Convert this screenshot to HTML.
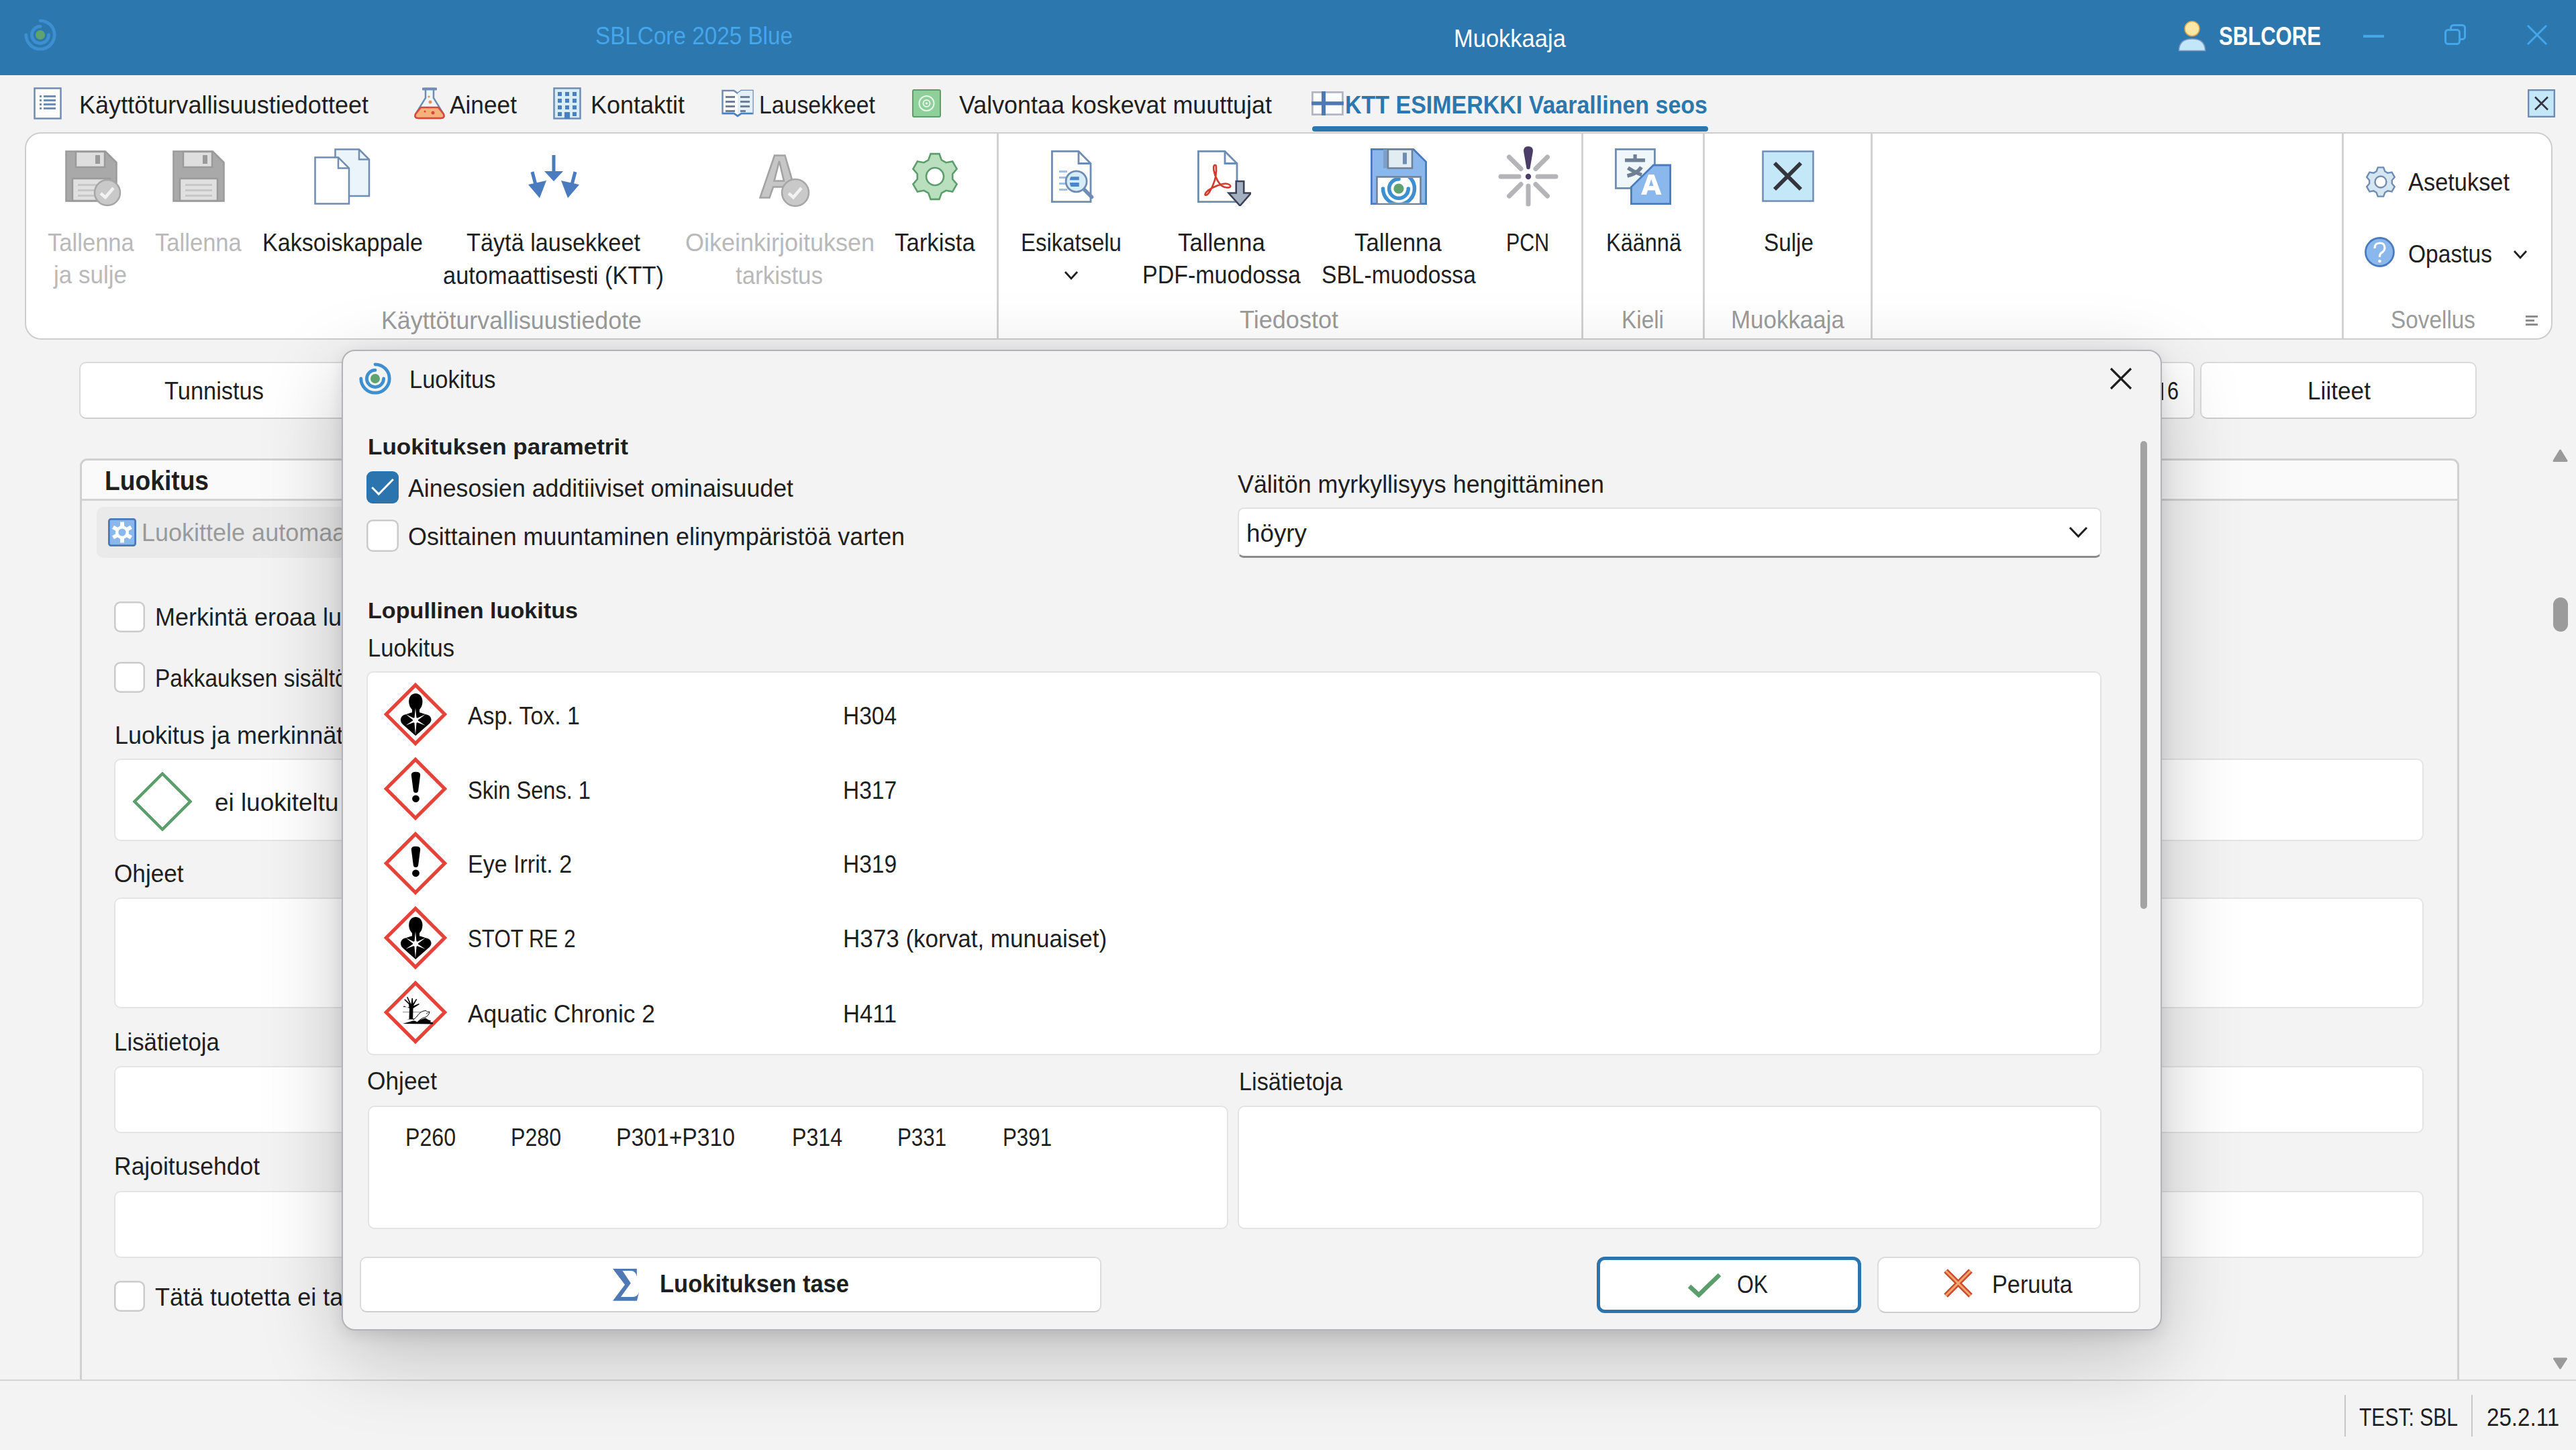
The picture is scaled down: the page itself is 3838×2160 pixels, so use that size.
<!DOCTYPE html>
<html><head><meta charset="utf-8"><title>Luokitus</title>
<style>
html,body{margin:0;padding:0;}
body{width:3838px;height:2160px;overflow:hidden;position:relative;background:#f3f3f3;font-family:"Liberation Sans",sans-serif;}
.a{position:absolute;display:block;}
.t{position:absolute;white-space:nowrap;transform-origin:0 0;}
</style></head><body>
<div class="a" style="left:0px;top:0px;width:3838px;height:112px;background:#2c77ad"></div>
<svg class="a" style="left:32px;top:24px;" width="56" height="56" viewBox="0 0 56 56"><path d="M28,6.800000000000001 A21.2,21.2 0 1 1 6.800000000000001,28" fill="none" stroke="#3d8fd0" stroke-width="4.8" stroke-linecap="round"/><path d="M28,15.4 A12.6,12.6 0 1 0 40.6,28" fill="none" stroke="#3d8fd0" stroke-width="4.8" stroke-linecap="round"/><circle cx="28" cy="28" r="7" fill="#5fa36f"/></svg>
<div class="t" style="left:887.0px;top:36.4px;font-size:36px;line-height:36px;color:#46a6ea;transform:scaleX(0.9238);">SBLCore 2025 Blue</div>
<div class="t" style="left:2166.0px;top:40.4px;font-size:36px;line-height:36px;color:#ffffff;transform:scaleX(0.9584);">Muokkaaja</div>
<svg class="a" style="left:3245px;top:30px;" width="42" height="47" viewBox="0 0 42 47"><circle cx="21" cy="12.8" r="11" fill="#fde7a6" stroke="#d6a24c" stroke-width="1.6"/><path d="M1.5,45.5 C1.5,33 9,28 21,28 C33,28 40.5,33 40.5,45.5 Z" fill="#c3e6f8" stroke="#7f9cc0" stroke-width="1.6"/></svg>
<div class="t" style="left:3306.0px;top:34.7px;font-size:38px;line-height:38px;color:#ffffff;font-weight:bold;transform:scaleX(0.8180);">SBLCORE</div>
<div class="a" style="left:3521px;top:52px;width:31px;height:4px;background:#46a6ea"></div>
<svg class="a" style="left:3642px;top:36px;" width="32" height="32" viewBox="0 0 32 32"><rect x="9.5" y="1.5" width="21" height="21" rx="4" fill="none" stroke="#46a6ea" stroke-width="3"/><rect x="1.5" y="8.5" width="21" height="21" rx="4" fill="#2c77ad" stroke="#46a6ea" stroke-width="3"/></svg>
<svg class="a" style="left:3764px;top:36px;" width="32" height="32" viewBox="0 0 32 32"><path d="M2,2 L30,30 M30,2 L2,30" stroke="#46a6ea" stroke-width="3" fill="none"/></svg>
<svg class="a" style="left:50px;top:130px;" width="42" height="48" viewBox="0 0 42 48"><rect x="1.5" y="1.5" width="39" height="45" fill="#fff" stroke="#6f8db3" stroke-width="2.5"/><rect x="9" y="12" width="3" height="3" fill="#6f8db3"/><rect x="15" y="12" width="18" height="3" fill="#6f8db3"/><rect x="9" y="18" width="3" height="3" fill="#6f8db3"/><rect x="15" y="18" width="18" height="3" fill="#6f8db3"/><rect x="9" y="24" width="3" height="3" fill="#6f8db3"/><rect x="15" y="24" width="18" height="3" fill="#6f8db3"/><rect x="9" y="30" width="3" height="3" fill="#6f8db3"/><rect x="15" y="30" width="18" height="3" fill="#6f8db3"/></svg>
<svg class="a" style="left:616px;top:130px;" width="48" height="48" viewBox="0 0 48 48"><path d="M16,2 h16 M18,2 v14 L3,40 Q1,46 7,46 h34 Q47,46 45,40 L30,16 v-14" fill="#eef5fb" stroke="#6f8db3" stroke-width="2.5"/><path d="M11,30 h26 l8,10 Q47,46 41,46 h-34 Q1,46 3,40 Z" fill="#f5b27a" stroke="#d7473a" stroke-width="2.5"/><circle cx="23" cy="14" r="1.6" fill="#e8925a"/><circle cx="25" cy="22" r="2.5" fill="#e8925a"/><circle cx="29" cy="38" r="2.5" fill="#d7473a"/><circle cx="17" cy="36" r="1.5" fill="#d7473a"/><rect x="13" y="0.5" width="22" height="4" rx="1" fill="#6f8db3"/></svg>
<svg class="a" style="left:824px;top:130px;" width="42" height="48" viewBox="0 0 42 48"><rect x="1.5" y="1.5" width="39" height="45" fill="#d7eefa" stroke="#6f8db3" stroke-width="2.5"/><rect x="7" y="7" width="6" height="6" fill="#4a7fc0"/><rect x="18" y="7" width="6" height="6" fill="#4a7fc0"/><rect x="29" y="7" width="6" height="6" fill="#4a7fc0"/><rect x="7" y="17" width="6" height="6" fill="#4a7fc0"/><rect x="18" y="17" width="6" height="6" fill="#4a7fc0"/><rect x="29" y="17" width="6" height="6" fill="#4a7fc0"/><rect x="7" y="27" width="6" height="6" fill="#4a7fc0"/><rect x="18" y="27" width="6" height="6" fill="#4a7fc0"/><rect x="29" y="27" width="6" height="6" fill="#4a7fc0"/><rect x="7" y="37" width="6" height="6" fill="#4a7fc0"/><rect x="29" y="37" width="6" height="6" fill="#4a7fc0"/><rect x="17" y="37" width="8" height="10" fill="#4a7fc0"/></svg>
<svg class="a" style="left:1075px;top:133px;" width="48" height="42" viewBox="0 0 48 42"><path d="M1.5,2 h17 l5.5,4 l5.5,-4 h17 v34 h-17 l-5.5,3.5 l-5.5,-3.5 h-17 Z" fill="#fff" stroke="#6f8db3" stroke-width="2.5"/><path d="M24,6 v30 h22.5 v-34 h-17 z" fill="#e3f0f7"/><rect x="6" y="10" width="14" height="3" fill="#6f7f95"/><rect x="28" y="10" width="14" height="3" fill="#6f7f95"/><rect x="6" y="17" width="14" height="3" fill="#6f7f95"/><rect x="28" y="17" width="14" height="3" fill="#6f7f95"/><rect x="6" y="24" width="14" height="3" fill="#6f7f95"/><rect x="28" y="24" width="14" height="3" fill="#6f7f95"/><rect x="6" y="31" width="14" height="3" fill="#6f7f95"/><rect x="28" y="31" width="8" height="3" fill="#6f7f95"/><path d="M1.5,36 h17 l5.5,4 l5.5,-4 h17" fill="none" stroke="#4a7fc0" stroke-width="2.5"/></svg>
<svg class="a" style="left:1359px;top:133px;" width="43" height="42" viewBox="0 0 43 42"><rect x="1" y="1" width="41" height="40" rx="2" fill="#8fcf9a" stroke="#5c9e6b" stroke-width="2"/><circle cx="21.5" cy="21" r="11" fill="none" stroke="#e7f5ea" stroke-width="2"/><circle cx="21.5" cy="21" r="5" fill="none" stroke="#e7f5ea" stroke-width="2"/><circle cx="21.5" cy="21" r="1.8" fill="#e7f5ea"/></svg>
<svg class="a" style="left:1954px;top:136px;" width="48" height="36" viewBox="0 0 48 36"><rect x="1.4" y="1.4" width="45" height="33.2" fill="#fafcfd" stroke="#b2b6c0" stroke-width="2.8"/><rect x="15" y="0" width="6" height="36" fill="#4f79b3"/><rect x="0" y="15.2" width="48" height="5.5" fill="#4f79b3"/></svg>
<svg class="a" style="left:3766px;top:133px;" width="41" height="42" viewBox="0 0 41 42"><rect x="1.2" y="1.2" width="38.6" height="39.6" fill="#c5e8f8" stroke="#6f8db3" stroke-width="2.4"/><path d="M11,11.5 L30,30.5 M30,11.5 L11,30.5" stroke="#34343f" stroke-width="2.6"/></svg>
<div class="t" style="left:118.0px;top:139.4px;font-size:36px;line-height:36px;color:#1f1f1f;transform:scaleX(1.0019);">Käyttöturvallisuustiedotteet</div>
<div class="t" style="left:670.0px;top:139.4px;font-size:36px;line-height:36px;color:#1f1f1f;transform:scaleX(0.9798);">Aineet</div>
<div class="t" style="left:880.0px;top:139.4px;font-size:36px;line-height:36px;color:#1f1f1f;">Kontaktit</div>
<div class="t" style="left:1131.0px;top:139.4px;font-size:36px;line-height:36px;color:#1f1f1f;transform:scaleX(0.9395);">Lausekkeet</div>
<div class="t" style="left:1429.0px;top:139.4px;font-size:36px;line-height:36px;color:#1f1f1f;transform:scaleX(0.9965);">Valvontaa koskevat muuttujat</div>
<div class="t" style="left:2004.0px;top:139.4px;font-size:36px;line-height:36px;color:#2c77ad;font-weight:bold;transform:scaleX(0.9437);">KTT ESIMERKKI Vaarallinen seos</div>
<div class="a" style="left:1955px;top:188px;width:590px;height:8px;background:#2c77ad;border-radius:4px"></div>
<div class="a" style="left:37px;top:197px;width:3766px;height:309px;background:#fff;border:2px solid #cdcdcd;border-radius:24px;box-sizing:border-box"></div>
<div class="a" style="left:1485px;top:198px;width:3px;height:307px;background:#d2d2d2"></div>
<div class="a" style="left:2356px;top:198px;width:3px;height:307px;background:#d2d2d2"></div>
<div class="a" style="left:2537px;top:198px;width:3px;height:307px;background:#d2d2d2"></div>
<div class="a" style="left:2787px;top:198px;width:3px;height:307px;background:#d2d2d2"></div>
<div class="a" style="left:3489px;top:198px;width:3px;height:307px;background:#d2d2d2"></div>
<svg class="a" style="left:97px;top:224px;" width="78" height="77" viewBox="0 0 78 77"><path d="M1.5,1.5 H60 L76.5,18 V75.5 H1.5 Z" fill="#a9a9a9" stroke="#9a9a9a" stroke-width="2.5"/><rect x="16" y="2" width="43" height="23" fill="#dedede" stroke="#9a9a9a" stroke-width="2.5"/><rect x="45" y="7" width="7" height="13" fill="#9a9a9a"/><rect x="11" y="42" width="56" height="33" fill="#e0e0e0" stroke="#9a9a9a" stroke-width="2.5"/><rect x="19" y="50" width="40" height="3" fill="#c7c7c7"/><rect x="19" y="58" width="40" height="3" fill="#c7c7c7"/><rect x="19" y="66" width="40" height="3" fill="#c7c7c7"/></svg>
<svg class="a" style="left:138px;top:265px;" width="44" height="44" viewBox="0 0 44 44"><circle cx="22" cy="22" r="19" fill="#c9c9c9" stroke="#a6a6a6" stroke-width="2.5"/><path d="M12,23 L19,29 L31,15" fill="none" stroke="#f2f2f2" stroke-width="4.5"/></svg>
<svg class="a" style="left:257px;top:224px;" width="78" height="77" viewBox="0 0 78 77"><path d="M1.5,1.5 H60 L76.5,18 V75.5 H1.5 Z" fill="#a9a9a9" stroke="#9a9a9a" stroke-width="2.5"/><rect x="16" y="2" width="43" height="23" fill="#dedede" stroke="#9a9a9a" stroke-width="2.5"/><rect x="45" y="7" width="7" height="13" fill="#9a9a9a"/><rect x="11" y="42" width="56" height="33" fill="#e0e0e0" stroke="#9a9a9a" stroke-width="2.5"/><rect x="19" y="50" width="40" height="3" fill="#c7c7c7"/><rect x="19" y="58" width="40" height="3" fill="#c7c7c7"/><rect x="19" y="66" width="40" height="3" fill="#c7c7c7"/></svg>
<svg class="a" style="left:468px;top:221px;" width="84" height="84" viewBox="0 0 84 84"><path d="M31.5,1.5 H67 L82,16.5 V71 H31.5 Z" fill="#eaf4fa" stroke="#6f8db3" stroke-width="2.5"/><path d="M67,1.5 V16.5 H82" fill="none" stroke="#6f8db3" stroke-width="2.5"/><path d="M1.5,13.5 H36 L52,29.5 V82.5 H1.5 Z" fill="#fff" stroke="#6f8db3" stroke-width="2.5"/><path d="M36,13.5 V29.5 H52" fill="none" stroke="#6f8db3" stroke-width="2.5"/></svg>
<svg class="a" style="left:787px;top:231px;" width="76" height="64" viewBox="0 0 76 64"><rect x="35.5" y="0" width="5" height="27" fill="#4a7bbf"/><path d="M24,24 H52 L38,39 Z" fill="#4a7bbf"/><path d="M6,25 L11,44" stroke="#4a7bbf" stroke-width="5"/><path d="M0,44 L27,38 L17,64 Z" fill="#4a7bbf"/><path d="M70,25 L65,44" stroke="#4a7bbf" stroke-width="5"/><path d="M76,44 L49,38 L59,64 Z" fill="#4a7bbf"/></svg>
<svg class="a" style="left:1131px;top:230px;" width="54" height="67" viewBox="0 0 54 67"><path d="M23,1.5 H38.5 L52,48 L42,60 L38,48.5 H21 L15.5,64.5 H1.5 Z M22.5,39.5 H37 L30,10 Z" fill="#c6c6c6" stroke="#a3a3a3" stroke-width="2.6" fill-rule="evenodd"/></svg>
<svg class="a" style="left:1162px;top:264px;" width="46" height="46" viewBox="0 0 46 46"><circle cx="23" cy="23" r="20" fill="#c9c9c9" stroke="#a6a6a6" stroke-width="2.5"/><path d="M13,24 L20,30 L32,16" fill="none" stroke="#f2f2f2" stroke-width="4.5"/></svg>
<svg class="a" style="left:1356px;top:226px;" width="74" height="74" viewBox="0 0 74 74"><path d="M27.24,12.36 L30.54,3.11 L43.46,3.11 L46.76,12.36 L53.45,16.23 L63.12,14.46 L69.58,25.65 L63.22,33.14 L63.22,40.86 L69.58,48.35 L63.12,59.54 L53.45,57.77 L46.76,61.64 L43.46,70.89 L30.54,70.89 L27.24,61.64 L20.55,57.77 L10.88,59.54 L4.42,48.35 L10.78,40.86 L10.78,33.14 L4.42,25.65 L10.88,14.46 L20.55,16.23 Z" fill="#b9dfbf" stroke="#5c9e6b" stroke-width="2.6" stroke-linejoin="miter"/><circle cx="37" cy="37" r="13" fill="#fff" stroke="#5c9e6b" stroke-width="2.6"/></svg>
<svg class="a" style="left:1566px;top:224px;" width="64" height="79" viewBox="0 0 64 79"><path d="M1.4,1.4 H41 L59,19.5 V76.6 H1.4 Z" fill="#fff" stroke="#6f8db3" stroke-width="2.8"/><path d="M41,1.4 V19.5 H59" fill="none" stroke="#6f8db3" stroke-width="2.8"/><rect x="12" y="30" width="12" height="3" fill="#9cc0e6"/><rect x="12" y="39" width="10" height="3" fill="#9cc0e6"/><rect x="12" y="48" width="10" height="3" fill="#9cc0e6"/><rect x="12" y="57" width="12" height="3" fill="#9cc0e6"/><path d="M48.5,57.5 L60.5,69.5" stroke="#6f8db3" stroke-width="5.5" stroke-linecap="round"/><circle cx="37.6" cy="46.3" r="15.5" fill="#d6ecf8" stroke="#6f8db3" stroke-width="2.8"/><path d="M29.5,39.2 H41.7 V44.3 H27.8 Q28,41.5 29.5,39.2 Z M27.8,48.1 H41.7 V53.9 H29.5 Q28,51.5 27.8,48.1 Z" fill="#4a86c8"/></svg>
<svg class="a" style="left:1585px;top:403px;" width="22" height="15" viewBox="0 0 22 15"><path d="M2,2 L11,12 L20,2" fill="none" stroke="#1f1f1f" stroke-width="2.8"/></svg>
<svg class="a" style="left:1784px;top:224px;" width="80" height="83" viewBox="0 0 80 83"><path d="M1.4,1.4 H41 L59,19.5 V76.6 H1.4 Z" fill="#fff" stroke="#6f8db3" stroke-width="2.8"/><path d="M41,1.4 V19.5 H59" fill="none" stroke="#6f8db3" stroke-width="2.8"/><path d="M27,22 C22,20 24,35 30,45 C34,52 40,57 48,55 C52,53 46,48 38,50 C28,52 16,58 12,64 C10,68 14,68 18,62 C24,52 28,40 28,30 C28,25 28,22 27,22 Z" fill="none" stroke="#d23b2b" stroke-width="2.6"/><path d="M57.7,46 H69.2 V63.5 H80 L63.5,82.5 L46.5,63.5 H57.7 Z" fill="#a4b0c0" stroke="#3c4258" stroke-width="2.6"/></svg>
<svg class="a" style="left:2042px;top:221px;" width="84" height="84" viewBox="0 0 84 84"><defs><clipPath id="lbl"><rect x="11" y="44" width="61.5" height="37.5"/></clipPath></defs><path d="M1.4,1.4 H64 L82.6,20 V82.6 H1.4 Z" fill="#8ab8ec" stroke="#4a7bbf" stroke-width="2.8"/><rect x="19" y="1.5" width="8" height="28" fill="#7f9fc8"/><rect x="26" y="1.5" width="36" height="28" fill="#e2ecf3" stroke="#6f7f95" stroke-width="2.5"/><rect x="48" y="6.5" width="6" height="17" fill="#6f8db3"/><rect x="9.5" y="42.5" width="65" height="40.5" fill="#fff" stroke="#6f7f95" stroke-width="2.5"/><g clip-path="url(#lbl)"><path d="M42,36.5 A23.5,23.5 0 1 1 18.5,60" fill="none" stroke="#3d8fd0" stroke-width="5.5" stroke-linecap="round"/><path d="M42,45.7 A14.3,14.3 0 1 0 56.3,60" fill="none" stroke="#3d8fd0" stroke-width="5.5" stroke-linecap="round"/><circle cx="42" cy="60" r="7.6" fill="#5fa36f"/></g></svg>
<svg class="a" style="left:2232px;top:218px;" width="90" height="90" viewBox="0 0 90 90"><path d="M4,45 H31 M59,45 H86 M45,59 V86 M16.5,16 L34,33.5 M73.5,16 L56,33.5 M16.5,74 L34,56.5 M73.5,74 L56,56.5" stroke="#b5b5b9" stroke-width="7" stroke-linecap="round"/><path d="M38,7 Q38,0 45,0 Q52,0 52,7 L47.5,33 Q45,35.5 42.5,33 Z" fill="#4a3d67"/><circle cx="45" cy="45" r="4.2" fill="#4a3d67"/></svg>
<svg class="a" style="left:2406px;top:221px;" width="85" height="85" viewBox="0 0 85 85"><rect x="1.4" y="1.4" width="58" height="58" fill="#f0f7fb" stroke="#6f8db3" stroke-width="2.8"/><rect x="27.5" y="9" width="5.2" height="8" fill="#6f7f95"/><rect x="15" y="15" width="30" height="5.4" fill="#6f7f95"/><path d="M19.5,29 Q30,36 40,39.5 M39.5,28 Q33,38 18.5,41" fill="none" stroke="#6f7f95" stroke-width="5.5"/><path d="M57.5,25 H82.6 V82.6 H24.4 V57.5 Z" fill="#8ab8ec" stroke="#4a7bbf" stroke-width="2.8"/><path d="M39,69 L50,39 H58.5 L69.5,69 H61.5 L59.5,62.5 H49 L47,69 Z M51,56 H57.5 L54.2,46 Z" fill="#fff" fill-rule="evenodd"/></svg>
<svg class="a" style="left:2625px;top:224px;" width="78" height="77" viewBox="0 0 78 77"><rect x="1.5" y="1.5" width="75" height="74" fill="#c5e8f8" stroke="#6f8db3" stroke-width="2.5"/><path d="M19,19 L58,58 M58,19 L19,58" stroke="#34343f" stroke-width="5.8"/></svg>
<svg class="a" style="left:3523px;top:247px;" width="48" height="48" viewBox="0 0 48 48"><path d="M17.66,8.23 L19.83,2.40 L28.17,2.40 L30.34,8.23 L34.49,10.62 L40.62,9.58 L44.79,16.82 L40.83,21.61 L40.83,26.39 L44.79,31.18 L40.62,38.42 L34.49,37.38 L30.34,39.77 L28.17,45.60 L19.83,45.60 L17.66,39.77 L13.51,37.38 L7.38,38.42 L3.21,31.18 L7.17,26.39 L7.17,21.61 L3.21,16.82 L7.38,9.58 L13.51,10.62 Z" fill="#d5e6f2" stroke="#6f8db3" stroke-width="2.4" stroke-linejoin="miter"/><circle cx="24" cy="24" r="8.5" fill="#fff" stroke="#6f8db3" stroke-width="2.4"/></svg>
<svg class="a" style="left:3523px;top:353px;" width="45" height="45" viewBox="0 0 45 45"><circle cx="22.5" cy="22.5" r="21" fill="#8ab8ec" stroke="#4a7bbf" stroke-width="2.8"/><path d="M15,17 Q15,9 22.5,9 Q30,9 30,16 Q30,21 24.5,24 Q22.5,25.5 22.5,30" fill="none" stroke="#fff" stroke-width="3.2"/><circle cx="22.5" cy="36" r="2.3" fill="#fff"/></svg>
<svg class="a" style="left:3744px;top:372px;" width="22" height="15" viewBox="0 0 22 15"><path d="M2,2 L11,12 L20,2" fill="none" stroke="#1f1f1f" stroke-width="2.8"/></svg>
<div class="a" style="left:3763px;top:470px;width:18px;height:3px;background:#8c8c8c"></div>
<div class="a" style="left:3763px;top:476px;width:13px;height:3px;background:#8c8c8c"></div>
<div class="a" style="left:3763px;top:482px;width:18px;height:3px;background:#8c8c8c"></div>
<div class="t" style="left:71.0px;top:344.4px;font-size:36px;line-height:36px;color:#b9b9b9;transform:scaleX(0.9607);">Tallenna</div>
<div class="t" style="left:79.9px;top:392.4px;font-size:36px;line-height:36px;color:#b9b9b9;transform:scaleX(0.9731);">ja sulje</div>
<div class="t" style="left:231.0px;top:344.4px;font-size:36px;line-height:36px;color:#b9b9b9;transform:scaleX(0.9607);">Tallenna</div>
<div class="t" style="left:391.0px;top:344.4px;font-size:36px;line-height:36px;color:#1f1f1f;transform:scaleX(0.9477);">Kaksoiskappale</div>
<div class="t" style="left:695.0px;top:344.4px;font-size:36px;line-height:36px;color:#1f1f1f;transform:scaleX(0.9516);">Täytä lausekkeet</div>
<div class="t" style="left:660.0px;top:393.4px;font-size:36px;line-height:36px;color:#1f1f1f;transform:scaleX(0.9560);">automaattisesti (KTT)</div>
<div class="t" style="left:1021.0px;top:344.4px;font-size:36px;line-height:36px;color:#b9b9b9;">Oikeinkirjoituksen</div>
<div class="t" style="left:1096.0px;top:393.4px;font-size:36px;line-height:36px;color:#b9b9b9;transform:scaleX(0.9694);">tarkistus</div>
<div class="t" style="left:1333.0px;top:344.4px;font-size:36px;line-height:36px;color:#1f1f1f;transform:scaleX(0.9662);">Tarkista</div>
<div class="t" style="left:568.0px;top:460.4px;font-size:36px;line-height:36px;color:#9b9b9b;transform:scaleX(0.9943);">Käyttöturvallisuustiedote</div>
<div class="t" style="left:1521.0px;top:344.4px;font-size:36px;line-height:36px;color:#1f1f1f;transform:scaleX(0.9137);">Esikatselu</div>
<div class="t" style="left:1755.0px;top:344.4px;font-size:36px;line-height:36px;color:#1f1f1f;transform:scaleX(0.9681);">Tallenna</div>
<div class="t" style="left:1702.0px;top:392.4px;font-size:36px;line-height:36px;color:#1f1f1f;transform:scaleX(0.9432);">PDF-muodossa</div>
<div class="t" style="left:2018.0px;top:344.4px;font-size:36px;line-height:36px;color:#1f1f1f;transform:scaleX(0.9681);">Tallenna</div>
<div class="t" style="left:1969.0px;top:392.4px;font-size:36px;line-height:36px;color:#1f1f1f;transform:scaleX(0.9340);">SBL-muodossa</div>
<div class="t" style="left:2244.0px;top:344.4px;font-size:36px;line-height:36px;color:#1f1f1f;transform:scaleX(0.8425);">PCN</div>
<div class="t" style="left:1847.0px;top:459.4px;font-size:36px;line-height:36px;color:#9b9b9b;transform:scaleX(1.0020);">Tiedostot</div>
<div class="t" style="left:2393.0px;top:344.4px;font-size:36px;line-height:36px;color:#1f1f1f;transform:scaleX(0.9018);">Käännä</div>
<div class="t" style="left:2416.0px;top:459.4px;font-size:36px;line-height:36px;color:#9b9b9b;transform:scaleX(0.9259);">Kieli</div>
<div class="t" style="left:2628.0px;top:344.4px;font-size:36px;line-height:36px;color:#1f1f1f;transform:scaleX(0.9238);">Sulje</div>
<div class="t" style="left:2579.0px;top:459.4px;font-size:36px;line-height:36px;color:#9b9b9b;transform:scaleX(0.9699);">Muokkaaja</div>
<div class="t" style="left:3588.0px;top:254.4px;font-size:36px;line-height:36px;color:#1f1f1f;transform:scaleX(0.9555);">Asetukset</div>
<div class="t" style="left:3588.0px;top:361.4px;font-size:36px;line-height:36px;color:#1f1f1f;transform:scaleX(0.9321);">Opastus</div>
<div class="t" style="left:3562.0px;top:459.4px;font-size:36px;line-height:36px;color:#9b9b9b;transform:scaleX(0.9259);">Sovellus</div>
<div class="a" style="left:118px;top:539px;width:412px;height:85px;background:#fff;border:2px solid #dadada;border-radius:10px;box-sizing:border-box;border-bottom-color:#cfcfcf"></div>
<div class="t" style="left:245.0px;top:565.4px;font-size:36px;line-height:36px;color:#1f1f1f;transform:scaleX(0.9561);">Tunnistus</div>
<div class="a" style="left:2850px;top:539px;width:420px;height:85px;background:#fff;border:2px solid #dadada;border-radius:10px;box-sizing:border-box;border-bottom-color:#cfcfcf"></div>
<div class="t" style="left:3229.0px;top:565.4px;font-size:36px;line-height:36px;color:#1f1f1f;transform:scaleX(0.8509);">6</div>
<div class="a" style="left:3220px;top:570px;width:3px;height:26px;background:#2a2a30"></div>
<div class="a" style="left:3278px;top:539px;width:412px;height:85px;background:#fff;border:2px solid #dadada;border-radius:10px;box-sizing:border-box;border-bottom-color:#cfcfcf"></div>
<div class="t" style="left:3438.0px;top:565.4px;font-size:36px;line-height:36px;color:#1f1f1f;transform:scaleX(0.9779);">Liiteet</div>
<div class="a" style="left:119px;top:683px;width:3545px;height:1387px;background:#f3f3f3;border:3px solid #d0d0d0;border-radius:11px;box-sizing:border-box"></div>
<div class="a" style="left:122px;top:686px;width:3539px;height:58px;background:#fafafa;border-radius:9px 9px 0 0"></div>
<div class="a" style="left:122px;top:743px;width:3539px;height:3px;background:#d2d2d2"></div>
<div class="t" style="left:156.0px;top:696.0px;font-size:40px;line-height:40px;color:#1f1f1f;font-weight:bold;transform:scaleX(0.9304);">Luokitus</div>
<div class="a" style="left:144px;top:755px;width:1056px;height:76px;background:#eaeaea;border-radius:10px"></div>
<svg class="a" style="left:161px;top:772px;" width="42" height="42" viewBox="0 0 42 42"><rect x="1.4" y="1.4" width="39.2" height="39.2" rx="3" fill="#8ab8ec" stroke="#4a78b8" stroke-width="2.8"/><rect x="18" y="5.5" width="6" height="16" fill="#fff" transform="rotate(0 21 21)"/><rect x="18" y="5.5" width="6" height="16" fill="#fff" transform="rotate(60 21 21)"/><rect x="18" y="5.5" width="6" height="16" fill="#fff" transform="rotate(120 21 21)"/><rect x="18" y="5.5" width="6" height="16" fill="#fff" transform="rotate(180 21 21)"/><rect x="18" y="5.5" width="6" height="16" fill="#fff" transform="rotate(240 21 21)"/><rect x="18" y="5.5" width="6" height="16" fill="#fff" transform="rotate(300 21 21)"/><circle cx="21" cy="21" r="10" fill="#fff"/><circle cx="21" cy="21" r="5.6" fill="#8ab8ec"/></svg>
<div class="t" style="left:211.0px;top:776.4px;font-size:36px;line-height:36px;color:#9a9a9a;">Luokittele automaattisesti</div>
<svg class="a" style="left:170px;top:896px;" width="46" height="46" viewBox="0 0 46 46"><rect x="1.25" y="1.25" width="43.5" height="43.5" rx="8" fill="#fff" stroke="#cbcbcb" stroke-width="2.5"/></svg>
<div class="t" style="left:231.0px;top:902.4px;font-size:36px;line-height:36px;color:#1f1f1f;">Merkintä eroaa luokituksesta</div>
<svg class="a" style="left:170px;top:986px;" width="46" height="46" viewBox="0 0 46 46"><rect x="1.25" y="1.25" width="43.5" height="43.5" rx="8" fill="#fff" stroke="#cbcbcb" stroke-width="2.5"/></svg>
<div class="t" style="left:231.0px;top:993.4px;font-size:36px;line-height:36px;color:#1f1f1f;transform:scaleX(0.9300);">Pakkauksen sisältö</div>
<div class="t" style="left:171.0px;top:1078.4px;font-size:36px;line-height:36px;color:#1f1f1f;">Luokitus ja merkinnät</div>
<div class="a" style="left:170px;top:1130px;width:3441px;height:123px;background:#fff;border:2px solid #e4e4e4;border-radius:10px;box-sizing:border-box;"></div>
<svg class="a" style="left:198px;top:1150px;" width="88" height="88" viewBox="0 0 88 88"><path d="M44,2.5 L85.5,44 L44,85.5 L2.5,44 Z" fill="none" stroke="#5c9e6b" stroke-width="4.5"/></svg>
<div class="t" style="left:320.0px;top:1178.4px;font-size:36px;line-height:36px;color:#1f1f1f;transform:scaleX(1.0240);">ei luokiteltu</div>
<div class="t" style="left:170.0px;top:1284.4px;font-size:36px;line-height:36px;color:#1f1f1f;transform:scaleX(0.9762);">Ohjeet</div>
<div class="a" style="left:170px;top:1337px;width:3441px;height:165px;background:#fff;border:2px solid #e4e4e4;border-radius:10px;box-sizing:border-box;"></div>
<div class="t" style="left:170.0px;top:1535.4px;font-size:36px;line-height:36px;color:#1f1f1f;transform:scaleX(0.9681);">Lisätietoja</div>
<div class="a" style="left:170px;top:1588px;width:3441px;height:100px;background:#fff;border:2px solid #e4e4e4;border-radius:10px;box-sizing:border-box;"></div>
<div class="t" style="left:170.0px;top:1720.4px;font-size:36px;line-height:36px;color:#1f1f1f;transform:scaleX(0.9857);">Rajoitusehdot</div>
<div class="a" style="left:170px;top:1774px;width:3441px;height:100px;background:#fff;border:2px solid #e4e4e4;border-radius:10px;box-sizing:border-box;"></div>
<svg class="a" style="left:170px;top:1908px;" width="46" height="46" viewBox="0 0 46 46"><rect x="1.25" y="1.25" width="43.5" height="43.5" rx="8" fill="#fff" stroke="#cbcbcb" stroke-width="2.5"/></svg>
<div class="t" style="left:231.0px;top:1915.4px;font-size:36px;line-height:36px;color:#1f1f1f;">Tätä tuotetta ei tarvitse luokitella</div>
<svg class="a" style="left:3803px;top:669px;" width="23" height="20" viewBox="0 0 23 20"><path d="M11.5,2 L21,17.5 H2 Z" fill="#9a9a9a" stroke="#9a9a9a" stroke-width="3" stroke-linejoin="round"/></svg>
<div class="a" style="left:3804px;top:890px;width:22px;height:51px;background:#9b9b9b;border-radius:11px"></div>
<svg class="a" style="left:3803px;top:2022px;" width="23" height="18" viewBox="0 0 23 18"><path d="M2.5,2 H20.5 L11.5,16 Z" fill="#9a9a9a" stroke="#9a9a9a" stroke-width="3" stroke-linejoin="round"/></svg>
<div class="a" style="left:0px;top:2055px;width:3838px;height:2px;background:#d4d4d4"></div>
<div class="a" style="left:0px;top:2057px;width:3838px;height:103px;background:#f3f3f3"></div>
<div class="a" style="left:3493px;top:2078px;width:2px;height:62px;background:#c8c8c8"></div>
<div class="a" style="left:3682px;top:2078px;width:2px;height:62px;background:#c8c8c8"></div>
<div class="t" style="left:3515.0px;top:2094.4px;font-size:36px;line-height:36px;color:#1f1f1f;transform:scaleX(0.8350);">TEST: SBL</div>
<div class="t" style="left:3705.0px;top:2094.4px;font-size:36px;line-height:36px;color:#1f1f1f;transform:scaleX(0.9202);">25.2.11</div>
<div class="a" style="left:509px;top:521px;width:2712px;height:1461px;background:#f3f3f3;border:2px solid #b3b3b7;border-radius:20px;box-sizing:border-box;box-shadow:0 6px 22px rgba(0,0,0,0.10), 0 36px 120px rgba(0,0,0,0.22)"></div>
<svg class="a" style="left:531px;top:536px;" width="56" height="56" viewBox="0 0 56 56"><path d="M28,6.800000000000001 A21.2,21.2 0 1 1 6.800000000000001,28" fill="none" stroke="#3d8fd0" stroke-width="4.8" stroke-linecap="round"/><path d="M28,15.4 A12.6,12.6 0 1 0 40.6,28" fill="none" stroke="#3d8fd0" stroke-width="4.8" stroke-linecap="round"/><circle cx="28" cy="28" r="7" fill="#5fa36f"/></svg>
<div class="t" style="left:609.5px;top:548.0px;font-size:36px;line-height:36px;color:#1f1f1f;transform:scaleX(0.9582);">Luokitus</div>
<svg class="a" style="left:3143px;top:547px;" width="34" height="34" viewBox="0 0 34 34"><path d="M2,2 L32,32 M32,2 L2,32" stroke="#1f1f1f" stroke-width="3.2"/></svg>
<div class="t" style="left:548.0px;top:649.0px;font-size:33px;line-height:33px;color:#1f1f1f;font-weight:bold;transform:scaleX(1.0631);">Luokituksen parametrit</div>
<svg class="a" style="left:546px;top:702px;" width="48" height="48" viewBox="0 0 48 48"><rect x="0" y="0" width="48" height="48" rx="9" fill="#2c74ad"/><path d="M8.2,24.0 L18.2,34.1 L39.8,12.0" fill="none" stroke="#fff" stroke-width="3"/></svg>
<div class="t" style="left:608.0px;top:710.4px;font-size:36px;line-height:36px;color:#1f1f1f;transform:scaleX(0.9925);">Ainesosien additiiviset ominaisuudet</div>
<svg class="a" style="left:546px;top:774px;" width="48" height="48" viewBox="0 0 48 48"><rect x="1.25" y="1.25" width="45.5" height="45.5" rx="8" fill="#fff" stroke="#cbcbcb" stroke-width="2.5"/></svg>
<div class="t" style="left:608.0px;top:781.9px;font-size:36px;line-height:36px;color:#1f1f1f;transform:scaleX(0.9969);">Osittainen muuntaminen elinympäristöä varten</div>
<div class="t" style="left:1844.0px;top:704.4px;font-size:36px;line-height:36px;color:#1f1f1f;transform:scaleX(0.9958);">Välitön myrkyllisyys hengittäminen</div>
<div class="a" style="left:1844px;top:756px;width:1287px;height:75px;background:#fff;border:2px solid #e0e0e0;border-radius:9px;box-sizing:border-box;border-bottom:3px solid #8a8a8a"></div>
<div class="t" style="left:1857.0px;top:777.0px;font-size:36px;line-height:36px;color:#1f1f1f;transform:scaleX(1.0225);">höyry</div>
<svg class="a" style="left:3082px;top:783px;" width="29" height="20" viewBox="0 0 29 20"><path d="M2,3 L14.5,16 L27,3" fill="none" stroke="#1f1f1f" stroke-width="3"/></svg>
<div class="a" style="left:3189px;top:657px;width:10px;height:697px;background:#a3a3a3;border-radius:5px"></div>
<div class="t" style="left:548.0px;top:893.0px;font-size:33px;line-height:33px;color:#1f1f1f;font-weight:bold;transform:scaleX(1.0349);">Lopullinen luokitus</div>
<div class="t" style="left:548.0px;top:948.4px;font-size:36px;line-height:36px;color:#1f1f1f;transform:scaleX(0.9620);">Luokitus</div>
<div class="a" style="left:546px;top:1000px;width:2585px;height:572px;background:#fff;border:2px solid #e3e3e3;border-radius:10px;box-sizing:border-box;"></div>
<svg class="a" style="left:571px;top:1016px;" width="96" height="96" viewBox="0 0 96 96"><path d="M48,4.4 L91.6,48 L48,91.6 L4.4,48 Z" fill="#fff" stroke="#e5433a" stroke-width="5.2"/><path d="M48.3,17 C42,17 38.2,22 38.2,29 C38.2,34.5 40.5,38.5 43,41 L43,45.2 C39.5,46.2 35,47.5 31.5,48.8 C28,49.8 26,53 26,56.5 C26,59.5 27.5,61.5 29.5,63.5 L48.2,80 L67,63.5 C69.5,61.5 71.5,59 71.5,56.5 C71.5,53 69.5,49.8 65.5,48.8 C62,47.5 57.5,46.2 54,45.2 L54,41 C56.5,38.5 58.5,34.5 58.5,29 C58.5,22 54.5,17 48.3,17 Z" fill="#000"/><path d="M48.00,38.50 L49.58,54.22 L63.05,48.07 L51.20,56.91 L62.62,64.64 L49.66,59.74 L48.00,78.50 L46.35,59.74 L33.70,64.61 L44.80,56.89 L33.58,47.99 L46.45,54.20 Z" fill="#fff"/><circle cx="48" cy="57" r="4" fill="#fff"/></svg>
<div class="t" style="left:697.0px;top:1049.4px;font-size:36px;line-height:36px;color:#1f1f1f;transform:scaleX(0.9410);">Asp. Tox. 1</div>
<div class="t" style="left:1256.0px;top:1049.4px;font-size:36px;line-height:36px;color:#1f1f1f;transform:scaleX(0.9298);">H304</div>
<svg class="a" style="left:571px;top:1127px;" width="96" height="96" viewBox="0 0 96 96"><path d="M48,4.4 L91.6,48 L48,91.6 L4.4,48 Z" fill="#fff" stroke="#e5433a" stroke-width="5.2"/><path d="M41.8,27.5 Q41.6,22.8 48.5,22.8 Q55.4,22.8 55.2,27.5 L52.2,50.5 Q51.8,54 48.5,54 Q45.2,54 44.8,50.5 Z" fill="#000"/><circle cx="48.5" cy="62.8" r="5.4" fill="#000"/></svg>
<div class="t" style="left:697.0px;top:1160.0px;font-size:36px;line-height:36px;color:#1f1f1f;transform:scaleX(0.9053);">Skin Sens. 1</div>
<div class="t" style="left:1256.0px;top:1160.0px;font-size:36px;line-height:36px;color:#1f1f1f;transform:scaleX(0.9298);">H317</div>
<svg class="a" style="left:571px;top:1238px;" width="96" height="96" viewBox="0 0 96 96"><path d="M48,4.4 L91.6,48 L48,91.6 L4.4,48 Z" fill="#fff" stroke="#e5433a" stroke-width="5.2"/><path d="M41.8,27.5 Q41.6,22.8 48.5,22.8 Q55.4,22.8 55.2,27.5 L52.2,50.5 Q51.8,54 48.5,54 Q45.2,54 44.8,50.5 Z" fill="#000"/><circle cx="48.5" cy="62.8" r="5.4" fill="#000"/></svg>
<div class="t" style="left:697.0px;top:1270.4px;font-size:36px;line-height:36px;color:#1f1f1f;transform:scaleX(0.9452);">Eye Irrit. 2</div>
<div class="t" style="left:1256.0px;top:1270.4px;font-size:36px;line-height:36px;color:#1f1f1f;transform:scaleX(0.9298);">H319</div>
<svg class="a" style="left:571px;top:1348.6px;" width="96" height="96.0" viewBox="0 0 96 96"><path d="M48,4.4 L91.6,48 L48,91.6 L4.4,48 Z" fill="#fff" stroke="#e5433a" stroke-width="5.2"/><path d="M48.3,17 C42,17 38.2,22 38.2,29 C38.2,34.5 40.5,38.5 43,41 L43,45.2 C39.5,46.2 35,47.5 31.5,48.8 C28,49.8 26,53 26,56.5 C26,59.5 27.5,61.5 29.5,63.5 L48.2,80 L67,63.5 C69.5,61.5 71.5,59 71.5,56.5 C71.5,53 69.5,49.8 65.5,48.8 C62,47.5 57.5,46.2 54,45.2 L54,41 C56.5,38.5 58.5,34.5 58.5,29 C58.5,22 54.5,17 48.3,17 Z" fill="#000"/><path d="M48.00,38.50 L49.58,54.22 L63.05,48.07 L51.20,56.91 L62.62,64.64 L49.66,59.74 L48.00,78.50 L46.35,59.74 L33.70,64.61 L44.80,56.89 L33.58,47.99 L46.45,54.20 Z" fill="#fff"/><circle cx="48" cy="57" r="4" fill="#fff"/></svg>
<div class="t" style="left:697.0px;top:1381.4px;font-size:36px;line-height:36px;color:#1f1f1f;transform:scaleX(0.8691);">STOT RE 2</div>
<div class="t" style="left:1256.0px;top:1381.4px;font-size:36px;line-height:36px;color:#1f1f1f;transform:scaleX(0.9725);">H373 (korvat, munuaiset)</div>
<svg class="a" style="left:571px;top:1460px;" width="96" height="96" viewBox="0 0 96 96"><path d="M48,4.4 L91.6,48 L48,91.6 L4.4,48 Z" fill="#fff" stroke="#e5433a" stroke-width="5.2"/><path d="M29,47.6 H56" stroke="#9a9a9a" stroke-width="1.2"/><path d="M38.5,58 L39,42 L31,38.5 L29.5,40 L38.5,40.5 L38,36 L31,29 L32.5,28.5 L39,34.5 L35,25.5 L36.5,25 L41.5,36 L42.5,27 L44,27 L44.5,35 L49,28 L50.3,28.7 L44.8,38.5 L53,35 L54,36 L44.5,42 L44.2,57 L48,58.5 L35,58.5 Z" fill="#000"/><path d="M29,65 L43,61 Q48,59.5 52,61 L57,58.5 L63,56.5 L67,59 L71,60.5 L70,62.5 L74,63 L74,65.5 Z" fill="#000"/><path d="M44.5,59.5 Q50,55 53,50.5 Q56,47 60,46 L64,45.5 L66,47.8 L69,47 L68.2,50 Q66,55 59,56.5 Q55,58 51,62.5" fill="#fff" stroke="#000" stroke-width="1"/><circle cx="65" cy="49.8" r="0.8" fill="#000"/></svg>
<div class="t" style="left:697.0px;top:1493.0px;font-size:36px;line-height:36px;color:#1f1f1f;transform:scaleX(0.9816);">Aquatic Chronic 2</div>
<div class="t" style="left:1256.0px;top:1493.0px;font-size:36px;line-height:36px;color:#1f1f1f;transform:scaleX(0.9599);">H411</div>
<div class="t" style="left:547.0px;top:1593.4px;font-size:36px;line-height:36px;color:#1f1f1f;transform:scaleX(0.9809);">Ohjeet</div>
<div class="a" style="left:548px;top:1647px;width:1282px;height:184px;background:#fff;border:2px solid #e3e3e3;border-radius:10px;box-sizing:border-box;"></div>
<div class="t" style="left:1846.0px;top:1594.4px;font-size:36px;line-height:36px;color:#1f1f1f;transform:scaleX(0.9526);">Lisätietoja</div>
<div class="a" style="left:1844px;top:1647px;width:1287px;height:184px;background:#fff;border:2px solid #e3e3e3;border-radius:10px;box-sizing:border-box;"></div>
<div class="t" style="left:604.0px;top:1677.4px;font-size:36px;line-height:36px;color:#1f1f1f;transform:scaleX(0.8922);">P260</div>
<div class="t" style="left:761.0px;top:1677.4px;font-size:36px;line-height:36px;color:#1f1f1f;transform:scaleX(0.8922);">P280</div>
<div class="t" style="left:918.0px;top:1677.4px;font-size:36px;line-height:36px;color:#1f1f1f;transform:scaleX(0.9356);">P301+P310</div>
<div class="t" style="left:1180.0px;top:1677.4px;font-size:36px;line-height:36px;color:#1f1f1f;transform:scaleX(0.8922);">P314</div>
<div class="t" style="left:1337.0px;top:1677.4px;font-size:36px;line-height:36px;color:#1f1f1f;transform:scaleX(0.8684);">P331</div>
<div class="t" style="left:1494.0px;top:1677.4px;font-size:36px;line-height:36px;color:#1f1f1f;transform:scaleX(0.8684);">P391</div>
<div class="a" style="left:536px;top:1872px;width:1105px;height:83px;background:#fff;border:2px solid #dcdcdc;border-radius:10px;box-sizing:border-box;border-bottom-color:#cdcdcd"></div>
<svg class="a" style="left:913px;top:1890px;" width="40" height="48" viewBox="0 0 40 48"><path d="M0,0 H35.8 V11.7 Q34,3 27,3 H14.5 L26.8,21.6 L11.9,42 H30 Q37,42 39.2,34 L36,47.7 H0 L18,23.8 Z" fill="#4f79b3"/></svg>
<div class="t" style="left:983.0px;top:1895.4px;font-size:36px;line-height:36px;color:#1f1f1f;font-weight:bold;transform:scaleX(0.9588);">Luokituksen tase</div>
<div class="a" style="left:2379px;top:1872px;width:394px;height:84px;background:#fff;border:5px solid #2c74ad;border-radius:12px;box-sizing:border-box;"></div>
<svg class="a" style="left:2514px;top:1895px;" width="51" height="38" viewBox="0 0 51 38"><path d="M3,21 L17,34 L48,4" fill="none" stroke="#5c9e6b" stroke-width="6.5"/></svg>
<div class="t" style="left:2588.0px;top:1896.4px;font-size:36px;line-height:36px;color:#1f1f1f;transform:scaleX(0.8843);">OK</div>
<div class="a" style="left:2797px;top:1872px;width:392px;height:84px;background:#fff;border:2.5px solid #dcdcdc;border-radius:12px;box-sizing:border-box;border-bottom-color:#cdcdcd"></div>
<svg class="a" style="left:2894px;top:1888px;" width="47" height="47" viewBox="0 0 47 47"><path d="M5,5 L42,42 M42,5 L5,42" stroke="#cf4a2f" stroke-width="8"/><path d="M5,5 L42,42 M42,5 L5,42" stroke="#f3a86a" stroke-width="3"/></svg>
<div class="t" style="left:2968.0px;top:1896.4px;font-size:36px;line-height:36px;color:#1f1f1f;transform:scaleX(0.9510);">Peruuta</div>

</body></html>
